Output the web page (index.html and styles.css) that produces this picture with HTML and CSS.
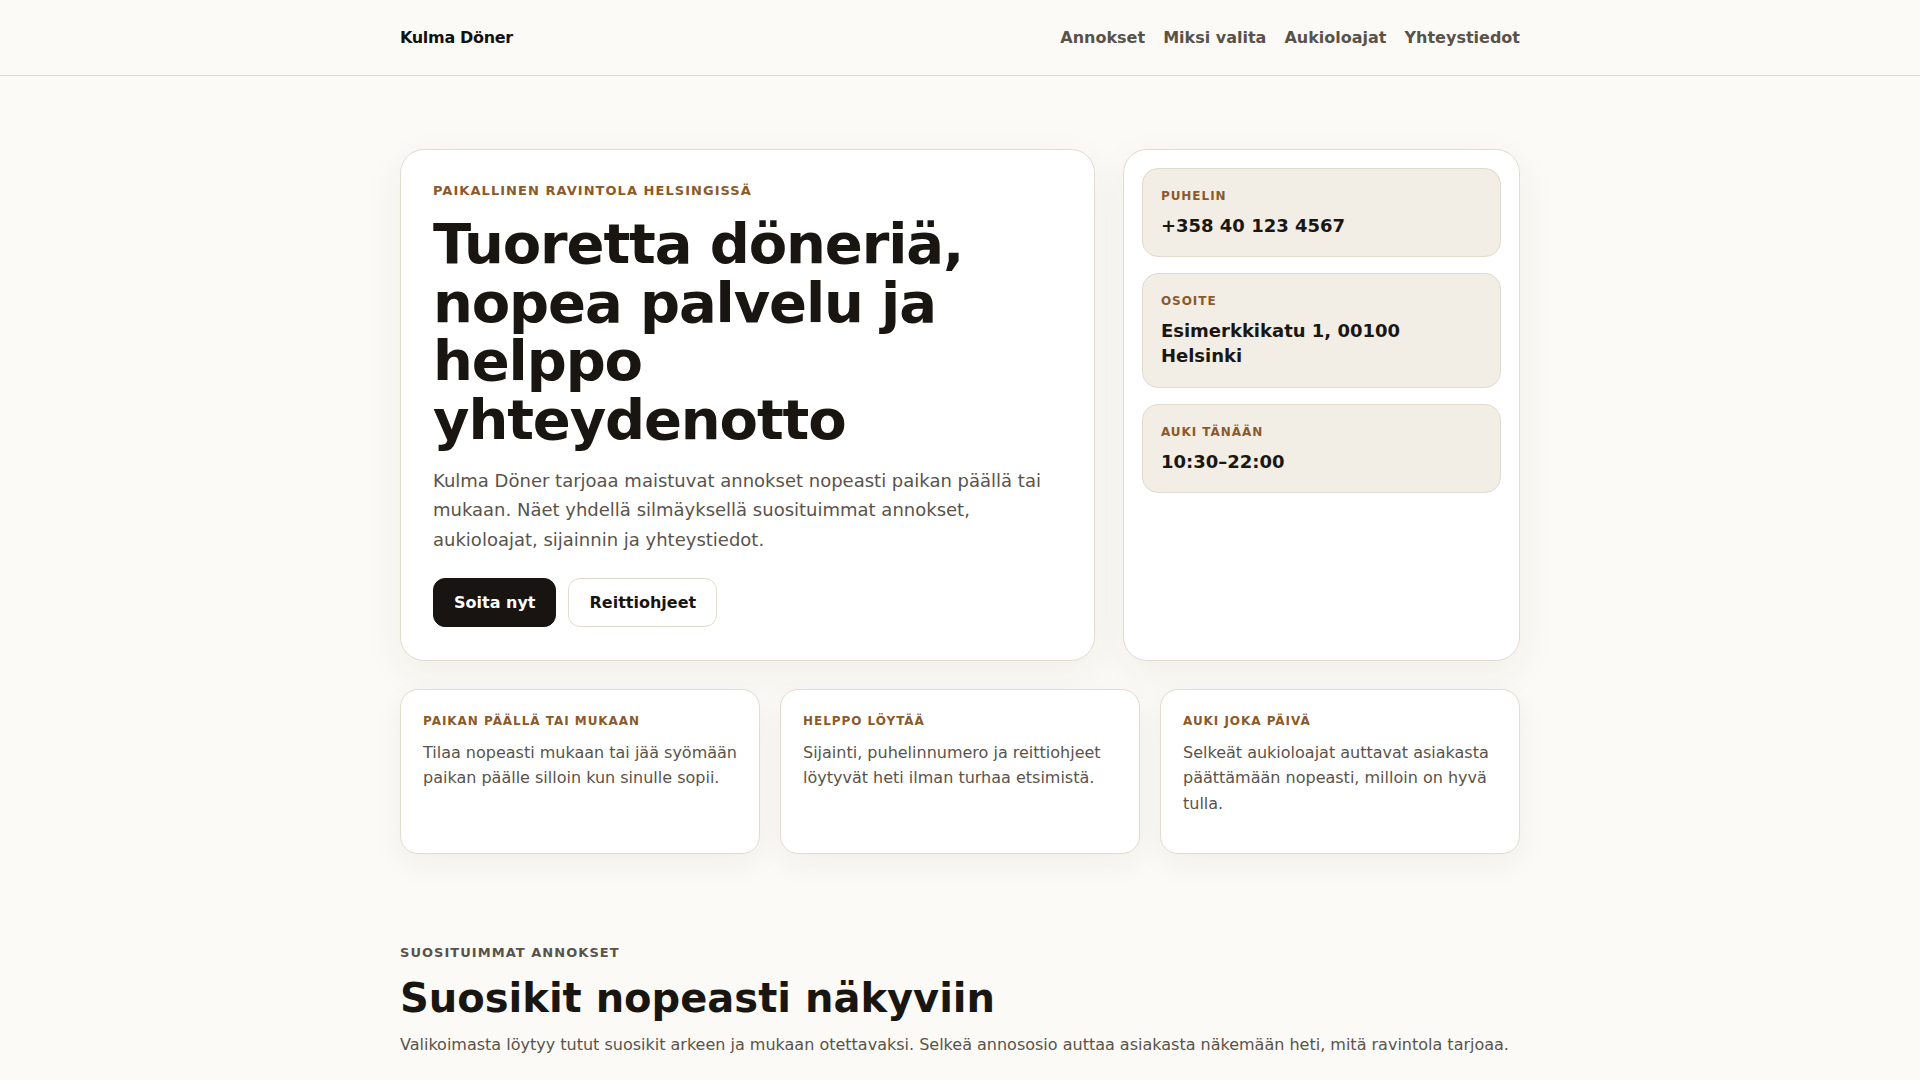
FILE: index.html
```html
<!DOCTYPE html>
<html lang="fi">
<head>
    <meta charset="UTF-8">
    <meta name="viewport" content="width=device-width, initial-scale=1.0">
    <title>Kulma Döner</title>
    <link rel="stylesheet" href="styles.css">
</head>
<body>
    <header class="nav">
        <div class="container nav-inner">
            <a class="brand" href="#">Kulma Döner</a>
            <nav class="nav-items">
                <a href="#annokset">Annokset</a>
                <a href="#miksi">Miksi valita</a>
                <a href="#aukiolo">Aukioloajat</a>
                <a href="#yhteystiedot">Yhteystiedot</a>
            </nav>
        </div>
    </header>

    <main class="container">
        <section class="hero">
            <div class="card hero-main">
                <p class="eyebrow">Paikallinen ravintola Helsingissä</p>
                <h1>Tuoretta döneriä, nopea palvelu ja helppo yhteydenotto</h1>
                <p class="lead">Kulma Döner tarjoaa maistuvat annokset nopeasti paikan päällä tai mukaan. Näet yhdellä silmäyksellä suosituimmat annokset, aukioloajat, sijainnin ja yhteystiedot.</p>
                <div class="actions">
                    <a class="btn btn-dark" href="tel:+358401234567">Soita nyt</a>
                    <a class="btn btn-light" href="#yhteystiedot">Reittiohjeet</a>
                </div>
            </div>

            <aside class="card hero-info" id="yhteystiedot">
                <div class="info-box">
                    <span class="info-label">Puhelin</span>
                    <strong class="info-value">+358 40 123 4567</strong>
                </div>
                <div class="info-box">
                    <span class="info-label">Osoite</span>
                    <strong class="info-value">Esimerkkikatu 1, 00100 Helsinki</strong>
                </div>
                <div class="info-box" id="aukiolo">
                    <span class="info-label">Auki tänään</span>
                    <strong class="info-value">10:30–22:00</strong>
                </div>
            </aside>
        </section>

        <section class="features" id="miksi">
            <div class="feature">
                <h3>Paikan päällä tai mukaan</h3>
                <p>Tilaa nopeasti mukaan tai jää syömään paikan päälle silloin kun sinulle sopii.</p>
            </div>
            <div class="feature">
                <h3>Helppo löytää</h3>
                <p>Sijainti, puhelinnumero ja reittiohjeet löytyvät heti ilman turhaa etsimistä.</p>
            </div>
            <div class="feature">
                <h3>Auki joka päivä</h3>
                <p>Selkeät aukioloajat auttavat asiakasta päättämään nopeasti, milloin on hyvä tulla.</p>
            </div>
        </section>

        <section class="menu" id="annokset">
            <p class="section-eyebrow">Suosituimmat annokset</p>
            <h2>Suosikit nopeasti näkyviin</h2>
            <p class="section-text">Valikoimasta löytyy tutut suosikit arkeen ja mukaan otettavaksi. Selkeä annososio auttaa asiakasta näkemään heti, mitä ravintola tarjoaa.</p>
        </section>
    </main>
</body>
</html>
```

FILE: styles.css
```css
* {
    box-sizing: border-box;
}

body {
    margin: 0;
    font-family: "DejaVu Sans", sans-serif;
    background-color: #fbfaf6; /* warm off-white */
    color: #1a1713;
}

a {
    color: inherit;
    text-decoration: none;
}

.container {
    max-width: 1120px;
    margin: 0 auto;
}

/* Navigation */
.nav {
    background-color: #fbfaf6;
    border-bottom: 1px solid #e2dccf;
}

.nav-inner {
    height: 75px;
    display: flex;
    justify-content: space-between;
    align-items: center;
}

.brand {
    font-size: 16px;
    font-weight: bold;
    letter-spacing: -0.02em;
    color: #141210;
}

.nav-items {
    display: flex;
    gap: 18px;
}

.nav-items a {
    font-size: 16px;
    font-weight: bold;
    color: #59524a;
}

/* Hero */
.hero {
    display: grid;
    grid-template-columns: 1.75fr 1fr;
    gap: 28px;
    margin-top: 73px;
}

.card {
    background-color: #fff;
    border: 1px solid #e2dccf;
    border-radius: 24px;
    box-shadow: 0 12px 40px rgba(60, 45, 25, 0.06);
}

.hero-main {
    padding: 32px 32px 33px;
}

.eyebrow {
    margin: 0;
    font-size: 13px;
    line-height: 1.45;
    font-weight: bold;
    letter-spacing: 0.08em;
    text-transform: uppercase;
    color: #8b5a2b;
}

h1 {
    margin: 14px 0 16px;
    font-size: 56px;
    line-height: 1.05;
    letter-spacing: -0.02em;
    color: #191612;
}

.lead {
    margin: 0;
    font-size: 18px;
    line-height: 1.63;
    color: #5a534b;
}

.actions {
    display: flex;
    gap: 12px;
    margin-top: 24px;
}

.btn {
    padding: 14px 20px;
    border-radius: 12px;
    border: 1px solid #e2dccf;
    font-size: 16px;
    line-height: 19px;
    font-weight: bold;
}

.btn-dark {
    background-color: #171411;
    border-color: #171411;
    color: #fff;
}

.btn-light {
    background-color: #fff;
    color: #171411;
}

.hero-info {
    padding: 18px;
    display: flex;
    flex-direction: column;
    gap: 16px;
}

.info-box {
    background-color: #f2ede5;
    border: 1px solid #e2dacd;
    border-radius: 16px;
    padding: 18px;
}

.info-label {
    display: block;
    font-size: 12px;
    line-height: 18px;
    font-weight: bold;
    letter-spacing: 0.08em;
    text-transform: uppercase;
    color: #8b5a2b;
}

.info-value {
    display: block;
    margin-top: 8px;
    font-size: 18px;
    line-height: 1.4;
    color: #1a1713;
}

/* Feature cards */
.features {
    display: grid;
    grid-template-columns: repeat(3, 1fr);
    gap: 20px;
    margin-top: 28px;
}

.feature {
    background-color: #fff;
    border: 1px solid #e2dccf;
    border-radius: 18px;
    padding: 23px 20px 36px 22px;
    box-shadow: 0 10px 30px rgba(60, 45, 25, 0.05);
}

.feature h3 {
    margin: 0;
    font-size: 12px;
    line-height: 1.4;
    letter-spacing: 0.08em;
    text-transform: uppercase;
    color: #8b5a2b;
}

.feature p {
    margin: 10px 0 0;
    font-size: 16px;
    line-height: 1.6;
    color: #5a534b;
}

/* Menu section */
.menu {
    padding-top: 90px;
}

.section-eyebrow {
    margin: 0;
    font-size: 13px;
    line-height: 1.4;
    font-weight: bold;
    letter-spacing: 0.08em;
    text-transform: uppercase;
    color: #59524a;
}

h2 {
    margin: 13px 0 11px;
    font-size: 40px;
    line-height: 1.15;
    color: #191612;
}

.section-text {
    margin: 0;
    font-size: 16px;
    line-height: 1.6;
    color: #5a534b;
}
```
